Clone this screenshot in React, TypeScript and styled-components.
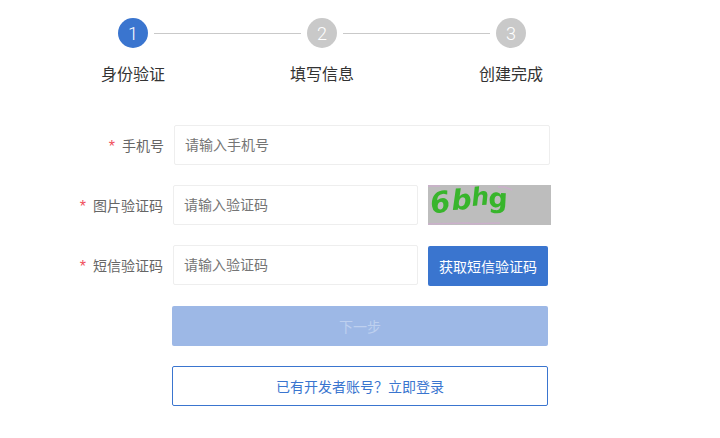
import { FC } from "react";
import styled, { createGlobalStyle } from "styled-components";

const GlobalStyle = createGlobalStyle`
    html, body {
        margin: 0;
        background: #fff;
        font-family: "Liberation Sans", "Noto Sans CJK SC", sans-serif;
    }
`;

const Page = styled.div`
    width: 720px;
    height: 438px;
    overflow: hidden;
    padding-top: 18px;
    box-sizing: border-box;
`;

const Track = styled.div`
    display: flex;
    align-items: center;
    padding-left: 118px;
`;

const Circle = styled.div<{ $active?: boolean }>`
    width: 30px;
    height: 30px;
    border-radius: 50%;
    display: flex;
    align-items: center;
    justify-content: center;
    color: #fff;
    font-family: Roboto, sans-serif;
    font-size: 18px;
    font-weight: 300;
    background: ${(p) => (p.$active ? "#3a75cf" : "#c9c9c9")};
`;

const Connector = styled.div`
    width: 147px;
    height: 1px;
    margin: 0 6px;
    background: #c9c9c9;
`;

const StepLabels = styled.div`
    display: flex;
    gap: 125px;
    padding-left: 101px;
    margin-top: 15px;
`;

const StepLabel = styled.span`
    width: 64px;
    font-size: 16px;
    line-height: 24px;
    color: #333;
    white-space: nowrap;
`;

const Form = styled.form`
    display: flex;
    flex-direction: column;
    margin-top: 38px;
`;

const Row = styled.div<{ $indent?: number }>`
    display: flex;
    align-items: flex-start;
    height: 40px;
    margin-bottom: 20px;
    padding-left: ${(p) => p.$indent ?? 0}px;
`;

const Label = styled.label<{ $width: number }>`
    width: ${(p) => p.$width}px;
    flex: none;
    height: 40px;
    padding-right: 10px;
    box-sizing: border-box;
    display: flex;
    align-items: center;
    justify-content: flex-end;
    font-size: 14px;
    color: #666;
`;

const Star = styled.span`
    color: #f0505c;
    font-size: 16px;
    margin-right: 7px;
    position: relative;
    top: 2px;
`;

const Input = styled.input<{ $width: number }>`
    width: ${(p) => p.$width}px;
    height: 40px;
    flex: none;
    box-sizing: border-box;
    border: 1px solid #eeeeee;
    border-radius: 2px;
    padding: 0 10px;
    font: inherit;
    font-size: 14px;
    outline: none;
    &::placeholder {
        color: #757575;
        opacity: 1;
    }
`;

const Captcha = styled.svg`
    flex: none;
    width: 123px;
    height: 40px;
    margin-left: 10px;
    display: block;
    overflow: visible;
`;

const CaptchaLetters = styled.g`
    fill: #38b52c;
    font-family: "DejaVu Sans", sans-serif;
    font-weight: 700;
    filter: blur(0.6px);
`;

const SmsButton = styled.button`
    flex: none;
    width: 120px;
    height: 40px;
    margin: 1px 0 0 10px;
    border: none;
    border-radius: 2px;
    padding: 0;
    background: #3a75cf;
    color: #fff;
    font: inherit;
    font-size: 14px;
`;

const NextButton = styled.button`
    width: 376px;
    height: 40px;
    margin-top: 1px;
    border: none;
    border-radius: 2px;
    padding: 0;
    background: #9db8e6;
    color: #bed0ef;
    font: inherit;
    font-size: 14px;
`;

const LoginButton = styled.button`
    width: 376px;
    height: 40px;
    margin-top: 1px;
    box-sizing: border-box;
    border: 1px solid #3a75cf;
    border-radius: 2px;
    padding: 0;
    background: #fff;
    color: #3a75cf;
    font: inherit;
    font-size: 14px;
`;

const steps = ["身份验证", "填写信息", "创建完成"];

const App: FC = () => {
    return (
        <Page>
            <GlobalStyle />
            <Track>
                <Circle $active>1</Circle>
                <Connector />
                <Circle>2</Circle>
                <Connector />
                <Circle>3</Circle>
            </Track>
            <StepLabels>
                {steps.map((s) => (
                    <StepLabel key={s}>{s}</StepLabel>
                ))}
            </StepLabels>
            <Form>
                <Row>
                    <Label $width={174}><Star>*</Star>手机号</Label>
                    <Input $width={376} placeholder="请输入手机号" />
                </Row>
                <Row>
                    <Label $width={173}><Star>*</Star>图片验证码</Label>
                    <Input $width={245} placeholder="请输入验证码" />
                    <Captcha viewBox="0 0 123 40">
                        <rect width="123" height="40" fill="#bdbdbd" />
                        <path d="M0 1 L12 1 M0 39 L42 38 M42 39 L72 38 M42 1 L50 3 M70 2 Q76 1 84 5" stroke="#cbb0cb" strokeWidth="1.5" fill="none" />
                        <CaptchaLetters>
                            <text x="4" y="29" fontSize="29" fontStyle="italic" transform="rotate(-10 4 29)">6</text>
                            <text x="24" y="25" fontSize="28" fontStyle="italic" transform="rotate(-3 24 25)">b</text>
                            <text x="44" y="21" fontSize="25" fontStyle="italic" transform="rotate(-5 44 21)">h</text>
                            <text x="60" y="22" fontSize="27" transform="rotate(3 60 22)">g</text>
                        </CaptchaLetters>
                    </Captcha>
                </Row>
                <Row>
                    <Label $width={173}><Star>*</Star>短信验证码</Label>
                    <Input $width={245} placeholder="请输入验证码" />
                    <SmsButton type="button">获取短信验证码</SmsButton>
                </Row>
                <Row $indent={172}>
                    <NextButton type="button">下一步</NextButton>
                </Row>
                <Row $indent={172}>
                    <LoginButton type="button">已有开发者账号？立即登录</LoginButton>
                </Row>
            </Form>
        </Page>
    );
};

export default App;
